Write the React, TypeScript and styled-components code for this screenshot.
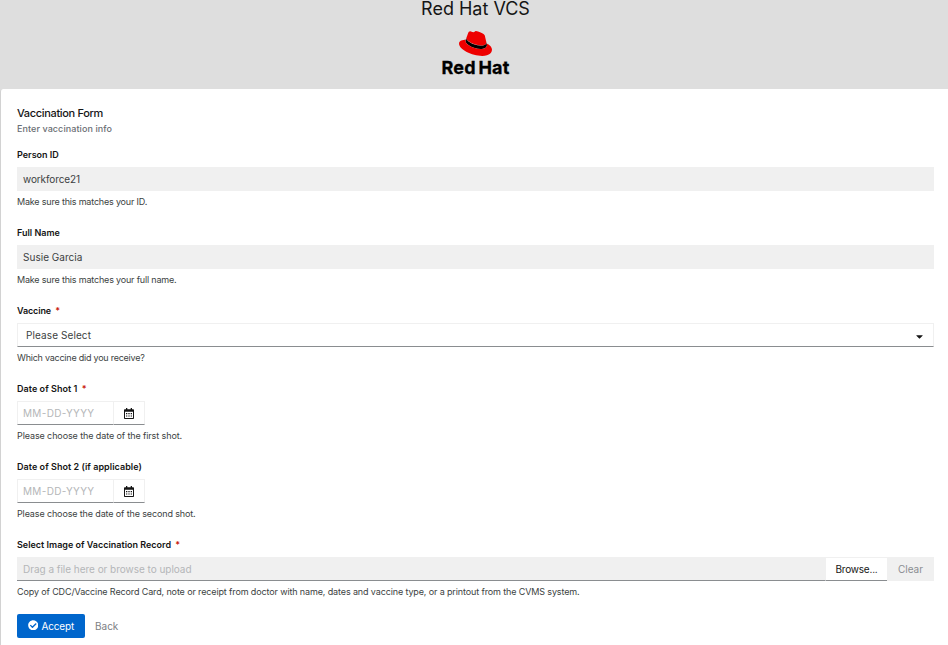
import React from "react";
import styled, { createGlobalStyle } from "styled-components";
import { FaCaretDown, FaCheckCircle } from "react-icons/fa";

const GlobalStyle = createGlobalStyle`
  *, *::before, *::after { box-sizing: border-box; }
  html { background: #dedede; }
  body {
    margin: 0;
    height: 645px;
    overflow: hidden;
    font-family: Inter, "Noto Sans", sans-serif;
    font-size: 10px;
    color: #151515;
  }
  button, input { font: inherit; letter-spacing: inherit; }
`;

const Page = styled.div`
  display: flex;
  flex-direction: column;
  height: 645px;
  background: #dedede;
`;

const Header = styled.header`
  flex: 0 0 89px;
  display: flex;
  flex-direction: column;
  align-items: center;
  padding-left: 3px;
`;

const SiteTitle = styled.h1`
  margin: 0;
  font-size: 18px;
  font-weight: 400;
  line-height: 18px;
`;

const Logo = styled.div`
  display: flex;
  flex-direction: column;
  align-items: center;
  margin-top: 13px;
  color: #000;
`;

const Wordmark = styled.span`
  margin-top: 1px;
  font-size: 18px;
  font-weight: 700;
  line-height: 22px;
  letter-spacing: 0.15px;
  word-spacing: -1.6px;
  -webkit-text-stroke: 0.3px #000;
`;

const Card = styled.main`
  flex: 1;
  padding: 16px 14px 0 16px;
  border-left: 1px solid #d2d2d2;
  border-top-left-radius: 3px;
  background: #fff;
`;

const FormTitle = styled.h2`
  margin: 0;
  font-size: 11px;
  font-weight: 500;
  line-height: 16px;
  letter-spacing: -0.34px;
`;

const FormSubtitle = styled.p`
  margin: 1px 0 11px;
  font-size: 9px;
  font-weight: 500;
  line-height: 14px;
  letter-spacing: 0.08px;
  color: #6a6e73;
`;

const Field = styled.div`
  display: flex;
  flex-direction: column;
  height: 78px;
`;

const Label = styled.label<{ $tracking?: number }>`
  margin-bottom: 4px;
  font-size: 9px;
  font-weight: 600;
  line-height: 16px;
  letter-spacing: ${({ $tracking = 0 }) => $tracking}px;
`;

const Required = styled.span`
  margin-left: 2px;
  color: #c9190b;
`;

const Help = styled.p<{ $tracking: number }>`
  margin: 4px 0 0;
  font-size: 9px;
  line-height: 14px;
  letter-spacing: ${({ $tracking }) => $tracking}px;
  white-space: nowrap;
  color: #3c3f42;
`;

const Input = styled.input<{ $tracking: number }>`
  width: 100%;
  height: 24px;
  padding: 0 6px 1px;
  border: 0;
  border-radius: 0;
  outline: 0;
  background: #f0f0f0;
  color: #3c3f42;
  letter-spacing: ${({ $tracking }) => $tracking}px;
  &::placeholder { color: #b4b6b8; opacity: 1; }
`;

const DateInput = styled(Input)`
  width: 97px;
  padding: 0 5px 1px;
  border: 1px solid #f0f0f0;
  border-bottom-color: #8a8d90;
  background: #fff;
`;

const FileInput = styled(Input)`
  flex: 1;
  width: auto;
  padding: 1px 6px 0;
  border-bottom: 1px solid #8a8d90;
`;

const Select = styled.button`
  display: flex;
  align-items: center;
  justify-content: space-between;
  height: 24px;
  padding: 0 8px 0 8px;
  border: 1px solid #f0f0f0;
  border-bottom-color: #8a8d90;
  background: #fff;
  color: #3c3f42;
  letter-spacing: 0.1px;
  span { padding-bottom: 1px; }
  svg { color: #151515; position: relative; top: 1px; }
`;

const InputGroup = styled.div`
  display: flex;
`;

const CalendarButton = styled.button`
  display: flex;
  align-items: center;
  justify-content: center;
  width: 31px;
  height: 24px;
  padding: 0;
  border: 1px solid #f0f0f0;
  border-left: 0;
  border-bottom-color: #8a8d90;
  background: #fff;
  color: #151515;
`;

const BrowseButton = styled.button`
  width: 62px;
  height: 24px;
  padding: 0 0 1px;
  border: 1px solid #f0f0f0;
  border-right: 0;
  border-bottom-color: #8a8d90;
  background: #fff;
  color: #151515;
  letter-spacing: -0.2px;
`;

const ClearButton = styled.button`
  width: 47px;
  height: 24px;
  padding: 0 0 1px;
  border: 0;
  background: #f0f0f0;
  color: #8a8d90;
`;

const Actions = styled.div`
  display: flex;
  margin-top: -1px;
`;

const AcceptButton = styled.button`
  display: flex;
  align-items: center;
  justify-content: center;
  gap: 3px;
  width: 68px;
  height: 24px;
  padding: 0;
  border: 0;
  border-radius: 2px;
  background: #06c;
  color: #fff;
  letter-spacing: -0.15px;
  svg { margin-bottom: 2px; }
`;

const BackButton = styled.button`
  height: 24px;
  margin-left: 10px;
  padding: 0 0 1px;
  border: 0;
  background: none;
  color: #7d8084;
`;

function Fedora() {
  return (
    <svg width="33" height="25" viewBox="0 2.9 24 18.2" aria-hidden="true">
      <path
        fill="#000"
        d="M20.11 11.95c.218 1.032.218 1.14.218 1.277 0 1.765-1.984 2.745-4.593 2.745-5.895.004-11.06-3.451-11.06-5.734 0-.32.066-.64.19-.925l.43-1.07c0 1.5 4.5 5.4 10.7 5.2 1.6 0 3.9-.3 3.9-2.2l-.06-.5z"
      />
      <path
        fill="#e00"
        d="M16.009 13.386c1.577 0 3.86-.326 3.86-2.202a1.765 1.765 0 0 0-.04-.431l-.94-4.08c-.216-.898-.406-1.305-1.982-2.093-1.223-.625-3.888-1.658-4.676-1.658-.733 0-.947.946-1.822.946-.842 0-1.467-.706-2.255-.706-.757 0-1.25.515-1.63 1.576 0 0-1.06 2.99-1.197 3.424a.81.81 0 0 0-.028.245c0 1.162 4.577 4.974 10.71 4.974m4.101-1.435c.218 1.032.218 1.14.218 1.277 0 1.765-1.984 2.745-4.593 2.745-5.895.004-11.06-3.451-11.06-5.734a2.326 2.326 0 0 1 .19-.925C2.746 9.415 0 9.794 0 12.217c0 3.969 9.405 8.861 16.851 8.861 5.71 0 7.149-2.582 7.149-4.62 0-1.605-1.387-3.425-3.887-4.512"
      />
    </svg>
  );
}

function CalendarIcon() {
  return (
    <svg width="10" height="11" viewBox="0 0 10 11" fill="currentColor" aria-hidden="true">
      <path
        fillRule="evenodd"
        d="M2 0h1.3v1.2h3.4V0H8v1.2h1c.6 0 1 .4 1 1V10c0 .6-.4 1-1 1H1c-.6 0-1-.4-1-1V2.200c0-.6.4-1 1-1h1zM1 3.800V10h8V3.800z"
      />
      <path d="M2 5h1.300v1.200H2zM4.350 5h1.300v1.200h-1.300zM6.700 5H8v1.200H6.700zM2 7.400h1.300v1.200H2zM4.350 7.400h1.300v1.200h-1.300zM6.700 7.400H8v1.200H6.700z" />
    </svg>
  );
}

export default function App() {
  return (
    <>
      <GlobalStyle />
      <Page>
        <Header>
          <SiteTitle>Red Hat VCS</SiteTitle>
          <Logo>
            <Fedora />
            <Wordmark>Red Hat</Wordmark>
          </Logo>
        </Header>
        <Card>
          <FormTitle>Vaccination Form</FormTitle>
          <FormSubtitle>Enter vaccination info</FormSubtitle>
          <Field>
            <Label>Person ID</Label>
            <Input readOnly value="workforce21" $tracking={-0.1} />
            <Help $tracking={-0.19}>Make sure this matches your ID.</Help>
          </Field>
          <Field>
            <Label>Full Name</Label>
            <Input readOnly value="Susie Garcia" $tracking={0.03} />
            <Help $tracking={-0.184}>Make sure this matches your full name.</Help>
          </Field>
          <Field>
            <Label $tracking={-0.12}>
              Vaccine <Required>*</Required>
            </Label>
            <Select type="button">
              <span>Please Select</span>
              <FaCaretDown size={11} />
            </Select>
            <Help $tracking={-0.235}>Which vaccine did you receive?</Help>
          </Field>
          <Field>
            <Label $tracking={0.05}>
              Date of Shot 1 <Required>*</Required>
            </Label>
            <InputGroup>
              <DateInput placeholder="MM-DD-YYYY" $tracking={0.34} />
              <CalendarButton type="button" aria-label="Choose date">
                <CalendarIcon />
              </CalendarButton>
            </InputGroup>
            <Help $tracking={-0.105}>Please choose the date of the first shot.</Help>
          </Field>
          <Field>
            <Label $tracking={0.05}>Date of Shot 2 (if applicable)</Label>
            <InputGroup>
              <DateInput placeholder="MM-DD-YYYY" $tracking={0.34} />
              <CalendarButton type="button" aria-label="Choose date">
                <CalendarIcon />
              </CalendarButton>
            </InputGroup>
            <Help $tracking={-0.133}>Please choose the date of the second shot.</Help>
          </Field>
          <Field>
            <Label>
              Select Image of Vaccination Record <Required>*</Required>
            </Label>
            <InputGroup>
              <FileInput placeholder="Drag a file here or browse to upload" $tracking={-0.03} />
              <BrowseButton type="button">Browse...</BrowseButton>
              <ClearButton type="button">Clear</ClearButton>
            </InputGroup>
            <Help $tracking={-0.1275}>
              Copy of CDC/Vaccine Record Card, note or receipt from doctor with name, dates and vaccine type, or a printout from the CVMS system.
            </Help>
          </Field>
          <Actions>
            <AcceptButton type="button">
              <FaCheckCircle size={10.5} />
              <span>Accept</span>
            </AcceptButton>
            <BackButton type="button">Back</BackButton>
          </Actions>
        </Card>
      </Page>
    </>
  );
}
